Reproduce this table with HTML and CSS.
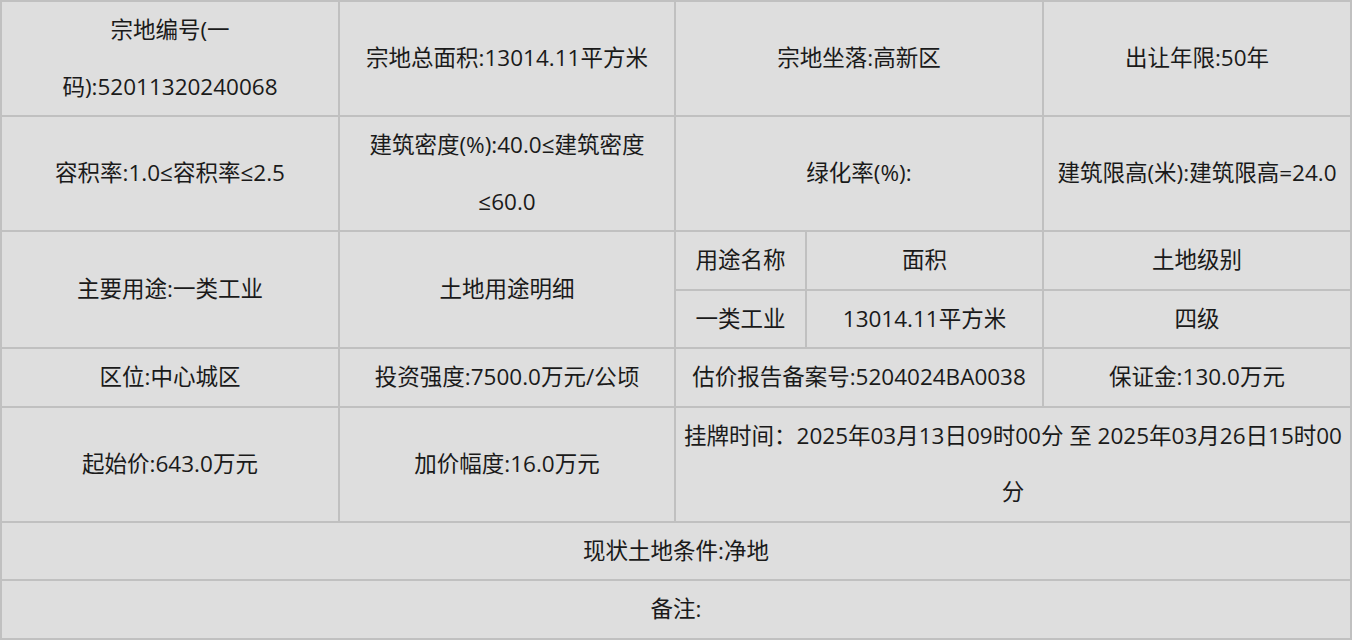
FILE: index.html
```html
<!DOCTYPE html>
<html lang="zh-CN">
<head>
<meta charset="utf-8">
<title>宗地信息</title>
<link rel="stylesheet" href="styles.css">
</head>
<body>
<table class="land-table">
  <colgroup>
    <col class="c1">
    <col class="c2">
    <col class="c3">
    <col class="c4">
    <col class="c5">
  </colgroup>
  <tbody>
    <tr>
      <td>宗地编号(一码):52011320240068</td>
      <td>宗地总面积:13014.11平方米</td>
      <td colspan="2">宗地坐落:高新区</td>
      <td>出让年限:50年</td>
    </tr>
    <tr>
      <td>容积率:1.0≤容积率≤2.5</td>
      <td>建筑密度(%):40.0≤建筑密度≤60.0</td>
      <td colspan="2">绿化率(%):</td>
      <td>建筑限高(米):建筑限高=24.0</td>
    </tr>
    <tr>
      <td rowspan="2">主要用途:一类工业</td>
      <td rowspan="2">土地用途明细</td>
      <td>用途名称</td>
      <td>面积</td>
      <td>土地级别</td>
    </tr>
    <tr>
      <td>一类工业</td>
      <td>13014.11平方米</td>
      <td>四级</td>
    </tr>
    <tr>
      <td>区位:中心城区</td>
      <td>投资强度:7500.0万元/公顷</td>
      <td colspan="2">估价报告备案号:5204024BA0038</td>
      <td>保证金:130.0万元</td>
    </tr>
    <tr>
      <td>起始价:643.0万元</td>
      <td>加价幅度:16.0万元</td>
      <td colspan="3">挂牌时间：2025年03月13日09时00分 至 2025年03月26日15时00分</td>
    </tr>
    <tr>
      <td colspan="5">现状土地条件:净地</td>
    </tr>
    <tr>
      <td colspan="5">备注:</td>
    </tr>
  </tbody>
</table>
</body>
</html>
```

FILE: styles.css
```css
html, body {
  margin: 0;
  padding: 0;
  background: #ffffff;
}

body {
  font-family: "Open Sans", "Noto Sans CJK SC", sans-serif;
  font-size: 22.5px;
  color: #1a1a1a;
}

.land-table {
  width: 1350px;
  table-layout: fixed;
  border-collapse: collapse;
  border: 2px solid #c0c0c0;
}

.c1 { width: 338px; }
.c2 { width: 336px; }
.c3 { width: 131px; }
.c4 { width: 237px; }
.c5 { width: 308px; }

.land-table td {
  background: #dedede;
  border: 2px solid #c0c0c0;
  padding: 0 5px;
  text-align: center;
  vertical-align: middle;
  line-height: 56.5px;
}
```
